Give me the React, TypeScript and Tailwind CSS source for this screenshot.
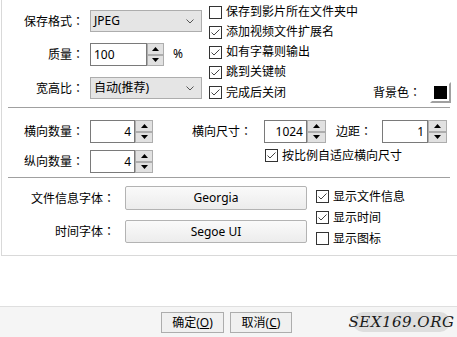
import React from "react";

const font = "font-['Noto_Sans','Noto_Sans_CJK_SC',sans-serif]";

const Check = ({ checked }: { checked?: boolean }) => (
  <svg width="13" height="13" viewBox="0 0 13 13" className="shrink-0">
    <rect x="0.5" y="0.5" width="12" height="12" fill="#fff" stroke="#333" />
    {checked && (
      <polyline points="2.5,6.5 5,9 10.5,3.5" fill="none" stroke="#444" strokeWidth="1" />
    )}
  </svg>
);

const CheckRow = ({ label, checked, className = "" }: { label: string; checked?: boolean; className?: string }) => (
  <div className={`flex items-center gap-[4px] ${className}`}>
    <Check checked={checked} />
    <span className="text-[12px] leading-none">{label}</span>
  </div>
);

const Colon = () => <span className="font-['Noto_Sans_CJK_TC',sans-serif]">：</span>;

const Combo = ({ value }: { value: string }) => (
  <div className="flex h-[22px] w-[112px] items-center justify-between border border-[#adadad] bg-[#e5e5e5] pl-[3px] pr-[7px]">
    <span className="text-[12px] leading-none">{value}</span>
    <svg width="8" height="5" viewBox="0 0 8 5">
      <polyline points="0.5,0.5 4,4 7.5,0.5" fill="none" stroke="#555" />
    </svg>
  </div>
);

const Spin = ({ w = 18 }: { w?: number }) => (
  <div className="flex h-full flex-col" style={{ width: w }}>
    {[0, 1].map((i) => (
      <div key={i} className="flex flex-1 items-center justify-center border border-[#adadad] bg-[#e1e1e1]">
        <svg width="7" height="4" viewBox="0 0 7 4">
          <polygon points={i === 0 ? "0,4 3.5,0 7,4" : "0,0 3.5,4 7,0"} fill="#000" />
        </svg>
      </div>
    ))}
  </div>
);

const NumField = ({ value, w, sw = 18, left }: { value: string; w: number; sw?: number; left?: boolean }) => (
  <div className="flex h-[23px]">
    <div
      className={`flex items-center border border-[#7a7a7a] bg-white px-[3px] text-[12px] leading-none ${left ? "justify-start" : "justify-end"}`}
      style={{ width: w }}
    >
      {value}
    </div>
    <Spin w={sw} />
  </div>
);

const Label = ({ text, w }: { text: string; w: number }) => (
  <div className="shrink-0 text-right text-[12px] leading-none" style={{ width: w }}>
    {text}
    <Colon />
  </div>
);

const FontButton = ({ value, h }: { value: string; h: number }) => (
  <div
    className="flex w-[182px] items-center justify-center rounded-[2px] border border-[#b3b3b3] bg-gradient-to-b from-[#fafafa] to-[#ececec] text-[12px] leading-none"
    style={{ height: h }}
  >
    {value}
  </div>
);

const Sep = () => <div className="ml-[6px] mr-[7px] border-t border-[#a0a0a0]" />;

export default function App() {
  return (
    <div className={`flex h-[337px] w-[457px] flex-col overflow-hidden bg-white text-black ${font}`}>
      <div className="ml-[1px] flex h-[256px] flex-col border-b border-l border-[#d9d9d9]">
        {/* output format */}
        <div className="flex h-[107px]">
          <div className="flex w-[207px] flex-col pt-[10px]">
            <div className="flex h-[22px] items-center gap-[6px]">
              <Label text="保存格式" w={82} />
              <Combo value="JPEG" />
            </div>
            <div className="mt-[11px] flex h-[22px] items-center gap-[6px]">
              <Label text="质量" w={82} />
              <div className="flex h-[22px]">
                <NumField value="100" w={57} sw={17} left />
              </div>
              <span className="ml-[3px] text-[12px] leading-none">%</span>
            </div>
            <div className="mt-[12px] flex h-[22px] items-center gap-[6px]">
              <Label text="宽高比" w={82} />
              <Combo value="自动(推荐)" />
            </div>
          </div>
          <div className="flex flex-1 flex-col pt-[2px]">
            <CheckRow className="h-[20px]" label="保存到影片所在文件夹中" />
            <CheckRow className="h-[20px]" label="添加视频文件扩展名" checked />
            <CheckRow className="h-[20px]" label="如有字幕则输出" checked />
            <CheckRow className="h-[20px]" label="跳到关键帧" checked />
            <div className="flex h-[21px] items-center">
              <CheckRow label="完成后关闭" checked />
              <span className="ml-auto text-[12px] leading-none">
                背景色
                <Colon />
              </span>
              <div className="ml-[9px] mr-[6px] h-[21px] w-[21px] border-[2px] border-b-[#a0a0a0] border-l-white border-r-[#a0a0a0] border-t-white bg-white p-[2px]">
                <div className="h-full w-full bg-black" />
              </div>
            </div>
          </div>
        </div>
        <Sep />

        {/* grid */}
        <div className="flex h-[69px] flex-col pt-[12px]">
          <div className="flex items-center">
            <Label text="横向数量" w={82} />
            <div className="ml-[6px]">
              <NumField value="4" w={45} />
            </div>
            <Label text="横向尺寸" w={99} />
            <div className="ml-[12px]">
              <NumField value="1024" w={43} sw={19} />
            </div>
            <Label text="边距" w={46} />
            <div className="ml-[10px]">
              <NumField value="1" w={46} sw={19} />
            </div>
          </div>
          <div className="mt-[7px] flex items-center">
            <Label text="纵向数量" w={82} />
            <div className="ml-[6px]">
              <NumField value="4" w={45} />
            </div>
            <CheckRow className="-mt-[12px] ml-[112px] gap-[3px]" label="按比例自适应横向尺寸" checked />
          </div>
        </div>
        <Sep />

        {/* fonts */}
        <div className="flex flex-1">
          <div className="flex flex-col pt-[8px]">
            <div className="flex items-center gap-[10px]">
              <Label text="文件信息字体" w={113} />
              <FontButton value="Georgia" h={24} />
            </div>
            <div className="mt-[10px] flex items-center gap-[10px]">
              <Label text="时间字体" w={113} />
              <FontButton value="Segoe UI" h={23} />
            </div>
          </div>
          <div className="ml-[9px] flex flex-col pt-[8px]">
            <CheckRow className="h-[21px]" label="显示文件信息" checked />
            <CheckRow className="h-[21px]" label="显示时间" checked />
            <CheckRow className="h-[21px]" label="显示图标" />
          </div>
        </div>
      </div>

      <div className="h-[50px]" />

      <div className="flex h-[31px] items-start border-t border-[#dfdfdf] bg-[#f5f5f5] pl-[161px] pt-[5px]">
        <div className="flex h-[21px] w-[63px] items-center justify-center border border-[#adadad] bg-[#f0f0f0] text-[12px] leading-none">
          确定(<span className="underline">O</span>)
        </div>
        <div className="ml-[6px] flex h-[21px] w-[62px] items-center justify-center border border-[#adadad] bg-[#f0f0f0] text-[12px] leading-none">
          取消(<span className="underline">C</span>)
        </div>
        <div className="ml-[61px] flex h-[20px] w-[97px] items-center justify-center rounded-full bg-[#dedede] font-['DejaVu_Serif',serif] text-[15px] italic leading-none tracking-[0.5px] text-[#1a1a1a]">
          SEX169.ORG
        </div>
      </div>
    </div>
  );
}
